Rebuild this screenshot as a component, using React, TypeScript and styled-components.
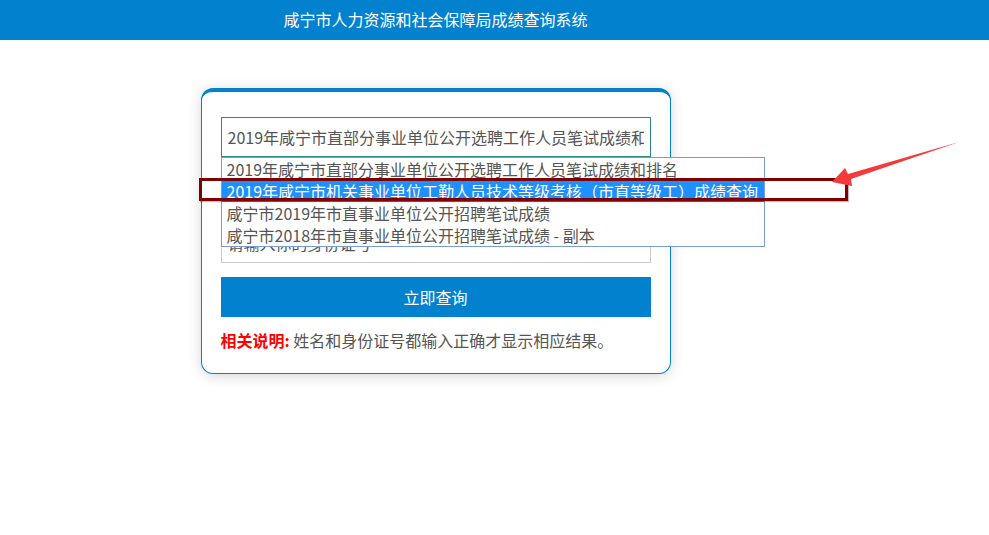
import React from 'react';
import styled, { createGlobalStyle } from 'styled-components';

const GlobalStyle = createGlobalStyle`
	body {
		margin: 0;
		background: #fff;
		font-family: "Noto Sans CJK SC", "Noto Sans", sans-serif;
	}
`;

const Page = styled.div`
	position: relative;
	width: 989px;
	height: 535px;
	overflow: hidden;
`;

const Header = styled.div`
	height: 40px;
	background: #0281ce;
`;

const HeaderInner = styled.div`
	width: 871px;
	height: 40px;
	display: flex;
	align-items: center;
	justify-content: center;
	color: #fff;
	font-size: 16px;
	padding-bottom: 2px;
	box-sizing: border-box;
`;

const Main = styled.div`
	width: 871px;
	padding-top: 48px;
`;

const Card = styled.div`
	position: relative;
	width: 470px;
	box-sizing: border-box;
	margin: 0 auto;
	border: 1px solid #0281ce;
	border-top: 4px solid #0281ce;
	border-radius: 12px;
	padding: 25px 19px 23px;
	box-shadow: 0 2px 14px rgba(0, 0, 0, 0.16);
	display: flex;
	flex-direction: column;
	gap: 13px;
	background: #fff;
`;

const Field = styled.input<{ $focused?: boolean }>`
	display: block;
	width: 430px;
	height: 40px;
	box-sizing: border-box;
	border: 1px solid ${(p) => (p.$focused ? '#2a8a87' : '#cccccc')};
	padding: 0 6px;
	font-family: inherit;
	font-size: 16px;
	color: #555;
	background: #fff;
	outline: none;
	&::placeholder {
		color: #555;
	}
`;

const Dropdown = styled.ul`
	position: absolute;
	left: 19px;
	top: 65px;
	width: 542px;
	margin: 0;
	padding: 0;
	list-style: none;
	border: 1px solid #7a9cd4;
	background: #fff;
	z-index: 2;
`;

const Option = styled.li<{ $active?: boolean }>`
	height: 22px;
	line-height: 22px;
	padding-left: 5px;
	font-size: 16px;
	white-space: nowrap;
	color: ${(p) => (p.$active ? '#fff' : '#555')};
	background: ${(p) => (p.$active ? '#1e90ff' : 'transparent')};
`;

const Button = styled.button`
	width: 430px;
	height: 40px;
	margin-top: 1px;
	border: none;
	background: #0281ce;
	color: #fff;
	font-family: inherit;
	font-size: 16px;
	cursor: pointer;
`;

const Note = styled.p`
	margin: 0;
	font-size: 16px;
	color: #555;
	line-height: 20px;
`;

const NoteLabel = styled.b`
	color: #ff0000;
`;

const Highlight = styled.div`
	position: absolute;
	left: 199px;
	top: 178px;
	width: 649px;
	height: 23px;
	box-sizing: border-box;
	border: 3px solid #7f0000;
	box-shadow: 1px 1px 1px rgba(0, 0, 0, 0.25);
	z-index: 3;
`;

const Arrow = styled.svg`
	position: absolute;
	left: 820px;
	top: 130px;
	z-index: 4;
`;

const options = [
	'2019年咸宁市直部分事业单位公开选聘工作人员笔试成绩和排名',
	'2019年咸宁市机关事业单位工勤人员技术等级考核（市直等级工）成绩查询',
	'咸宁市2019年市直事业单位公开招聘笔试成绩',
	'咸宁市2018年市直事业单位公开招聘笔试成绩 - 副本',
];

const App: React.FC = () => {
	return (
		<Page>
			<GlobalStyle />
			<Header>
				<HeaderInner>咸宁市人力资源和社会保障局成绩查询系统</HeaderInner>
			</Header>
			<Main>
				<Card>
					<Field $focused readOnly value="2019年咸宁市直部分事业单位公开选聘工作人员笔试成绩和排名" />
					<Dropdown>
						{options.map((o, i) => (
							<Option key={o} $active={i === 1}>
								{o}
							</Option>
						))}
					</Dropdown>
					<Field placeholder="请输入你的姓名" />
					<Field placeholder="请输入你的身份证号" />
					<Button>立即查询</Button>
					<Note>
						<NoteLabel>相关说明:</NoteLabel> 姓名和身份证号都输入正确才显示相应结果。
					</Note>
				</Card>
			</Main>
			<Highlight />
			<Arrow width="150" height="70" viewBox="0 0 150 70">
				<polygon points="12,52 25,38 28,44 139,12 31,49 32,56" fill="#f33b3b" />
			</Arrow>
		</Page>
	);
};

export default App;
